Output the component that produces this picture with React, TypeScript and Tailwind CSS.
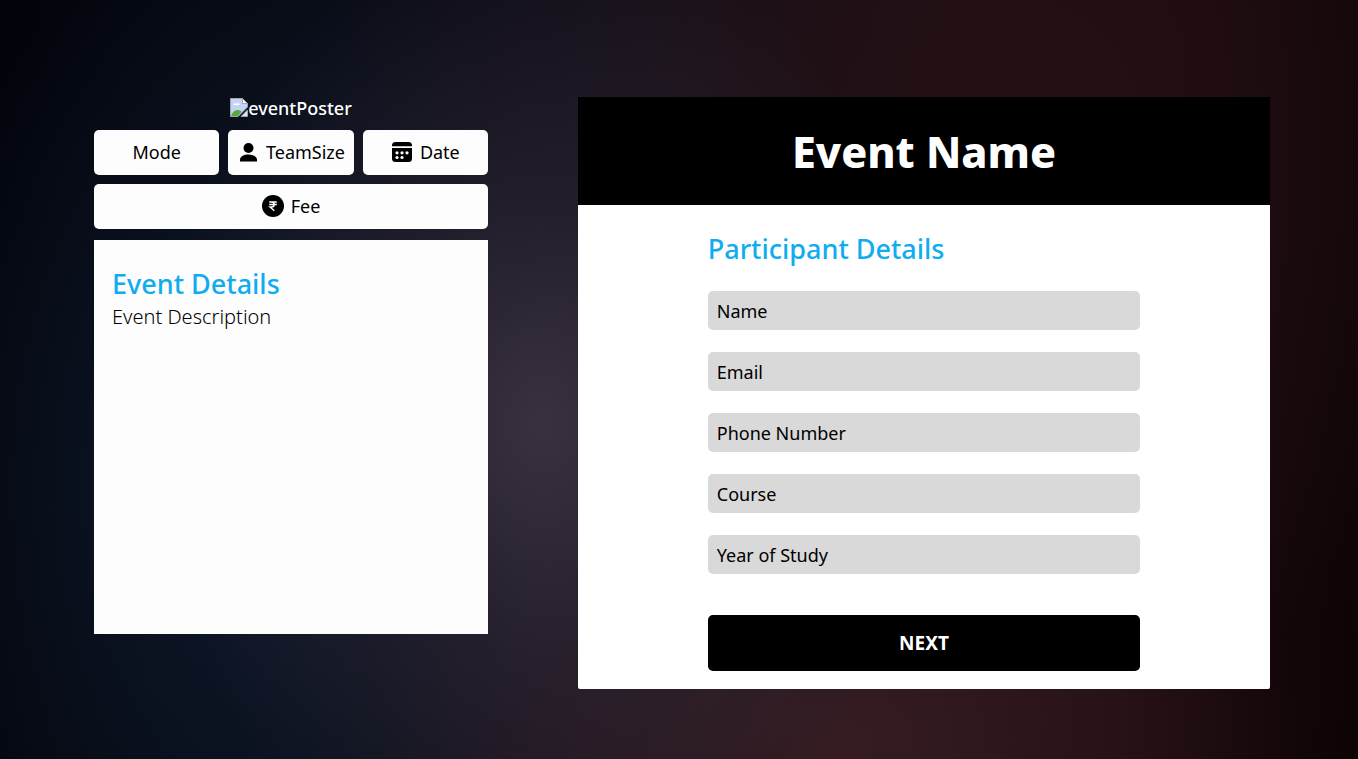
import { useState } from 'react';
import type { ReactNode } from 'react';

const campos = [
  { id: 'name', label: 'Name', type: 'text' },
  { id: 'email', label: 'Email', type: 'email' },
  { id: 'phone', label: 'Phone Number', type: 'tel' },
  { id: 'course', label: 'Course', type: 'text' },
  { id: 'year', label: 'Year of Study', type: 'text' },
];

function PersonIcon() {
  return (
    <svg viewBox="0 0 22 22" className="w-[22px] h-[22px] shrink-0" fill="currentColor" aria-hidden="true">
      <circle cx="11.500" cy="7" r="5" />
      <path d="M3 20.500v-1.700c0-3.400 4-5.300 8.500-5.300s8.500 1.900 8.500 5.300v1.700z" />
    </svg>
  );
}

function CalendarIcon() {
  return (
    <svg viewBox="0 0 22 22" className="w-[22px] h-[22px] shrink-0" aria-hidden="true">
      <path fill="currentColor" d="M4.500 1h13a3.500 3.500 0 0 1 3.500 3.500v.8H1v-.8A3.500 3.500 0 0 1 4.500 1zM1 7h20v10.500a3.500 3.500 0 0 1-3.500 3.500h-13A3.500 3.500 0 0 1 1 17.500z" />
      <g fill="#fff">
        <circle cx="6" cy="11.800" r="1.600" />
        <circle cx="11" cy="11.800" r="1.600" />
        <circle cx="16" cy="11.800" r="1.600" />
        <circle cx="6" cy="16.500" r="1.600" />
        <circle cx="11" cy="16.500" r="1.600" />
      </g>
    </svg>
  );
}

function RupeeIcon() {
  return (
    <svg viewBox="0 0 22 22" className="w-[22px] h-[22px] shrink-0" aria-hidden="true">
      <circle cx="11" cy="11" r="11" fill="currentColor" />
      <path d="M7.200 7h7.600M7.200 9.500h7.600M7.200 7h2.300c3.600 0 3.600 5 0 5H8l4.300 3.800" fill="none" stroke="#fff" strokeWidth="1.400" />
    </svg>
  );
}

function BrokenImage() {
  return (
    <svg viewBox="0 0 18 20" className="h-5 w-[18px] shrink-0" aria-hidden="true">
      <path d="M.5.500h12l5 5V9L8 18.500H.5z" fill="#c3d3f5" stroke="#a5a5a5" />
      <path d="M12.500.500v5h5z" fill="#fff" stroke="#a5a5a5" />
      <path d="M3.500 7c0-2 2-2 2.500-1 1-2 4-1 3.500 1z" fill="#fff" />
      <path d="M1 18c2-5.500 6-7.500 10.500-4.500L7.700 18z" fill="#54a83c" />
      <path d="M11 18.500h6.500V12z" fill="#e4eaf5" stroke="#a5a5a5" />
    </svg>
  );
}

function Info({ children, wide = false }: { children: ReactNode; wide?: boolean }) {
  return (
    <div className={`${wide ? 'col-span-3' : ''} flex h-[45px] items-center justify-center gap-[7px] rounded-[5px] bg-[#fdfdfd] pb-0.5 text-lg text-black`}>
      {children}
    </div>
  );
}

export default function App() {
  const [dados, setDados] = useState<Record<string, string>>({});

  return (
    <main className="min-h-screen bg-[#0c0c14] bg-[radial-gradient(ellipse_28%_68%_at_40%_56%,#3a3140_0%,#2e273699_45%,transparent_100%),radial-gradient(ellipse_34%_50%_at_62%_98%,#361c22_0%,transparent_100%),radial-gradient(ellipse_34%_75%_at_74%_24%,#251115_0%,transparent_100%),radial-gradient(ellipse_26%_75%_at_18%_64%,#0e192b_0%,transparent_100%),linear-gradient(94deg,#02040b_0%,#080b15_25%,#171019_52%,#1e0b0f_82%,#0d0406_100%)] pt-[97px] pr-[88px] pb-[69px] pl-[94px] font-['Noto_Sans',sans-serif]">
      <div className="grid grid-cols-[394fr_692fr] items-start gap-[90px]">
        <section>
          <div className="flex h-[22px] items-center justify-center text-lg font-medium text-white">
            <BrokenImage />
            eventPoster
          </div>
          <div className="mt-[11px] grid grid-cols-3 gap-[9px]">
            <Info>Mode</Info>
            <Info>
              <PersonIcon />
              TeamSize
            </Info>
            <Info>
              <CalendarIcon />
              Date
            </Info>
            <Info wide>
              <RupeeIcon />
              Fee
            </Info>
          </div>
          <article className="mt-[11px] min-h-[394px] bg-[#fdfdfd] px-[18px] pt-[26px]">
            <h2 className="text-[27px] leading-9 font-medium text-[#10acf0]">Event Details</h2>
            <p className="text-xl leading-[30px] font-light text-black">Event Description</p>
          </article>
        </section>

        <section className="rounded-b-xs bg-white pb-[18px]">
          <header className="flex h-[108px] items-center justify-center bg-black pt-0.5">
            <h1 className="text-[43px] font-extrabold text-white">Event Name</h1>
          </header>
          <form className="mx-auto w-5/8 pt-[26px]" onSubmit={(e) => e.preventDefault()}>
            <h2 className="text-[27px] leading-9 font-medium text-[#10acf0]">Participant Details</h2>
            <div className="mt-6 flex flex-col gap-[22px]">
              {campos.map((c) => (
                <input
                  key={c.id}
                  type={c.type}
                  name={c.id}
                  aria-label={c.label}
                  placeholder={c.label}
                  value={dados[c.id] ?? ''}
                  onChange={(e) => setDados({ ...dados, [c.id]: e.target.value })}
                  className="h-[39px] w-full rounded-[5px] bg-[#d9d9d9] px-[9px] text-lg text-black placeholder-black"
                />
              ))}
            </div>
            <button type="submit" className="mt-[41px] h-14 w-full rounded-[5px] bg-black text-[19px] font-bold text-white">
              NEXT
            </button>
          </form>
        </section>
      </div>
    </main>
  );
}
